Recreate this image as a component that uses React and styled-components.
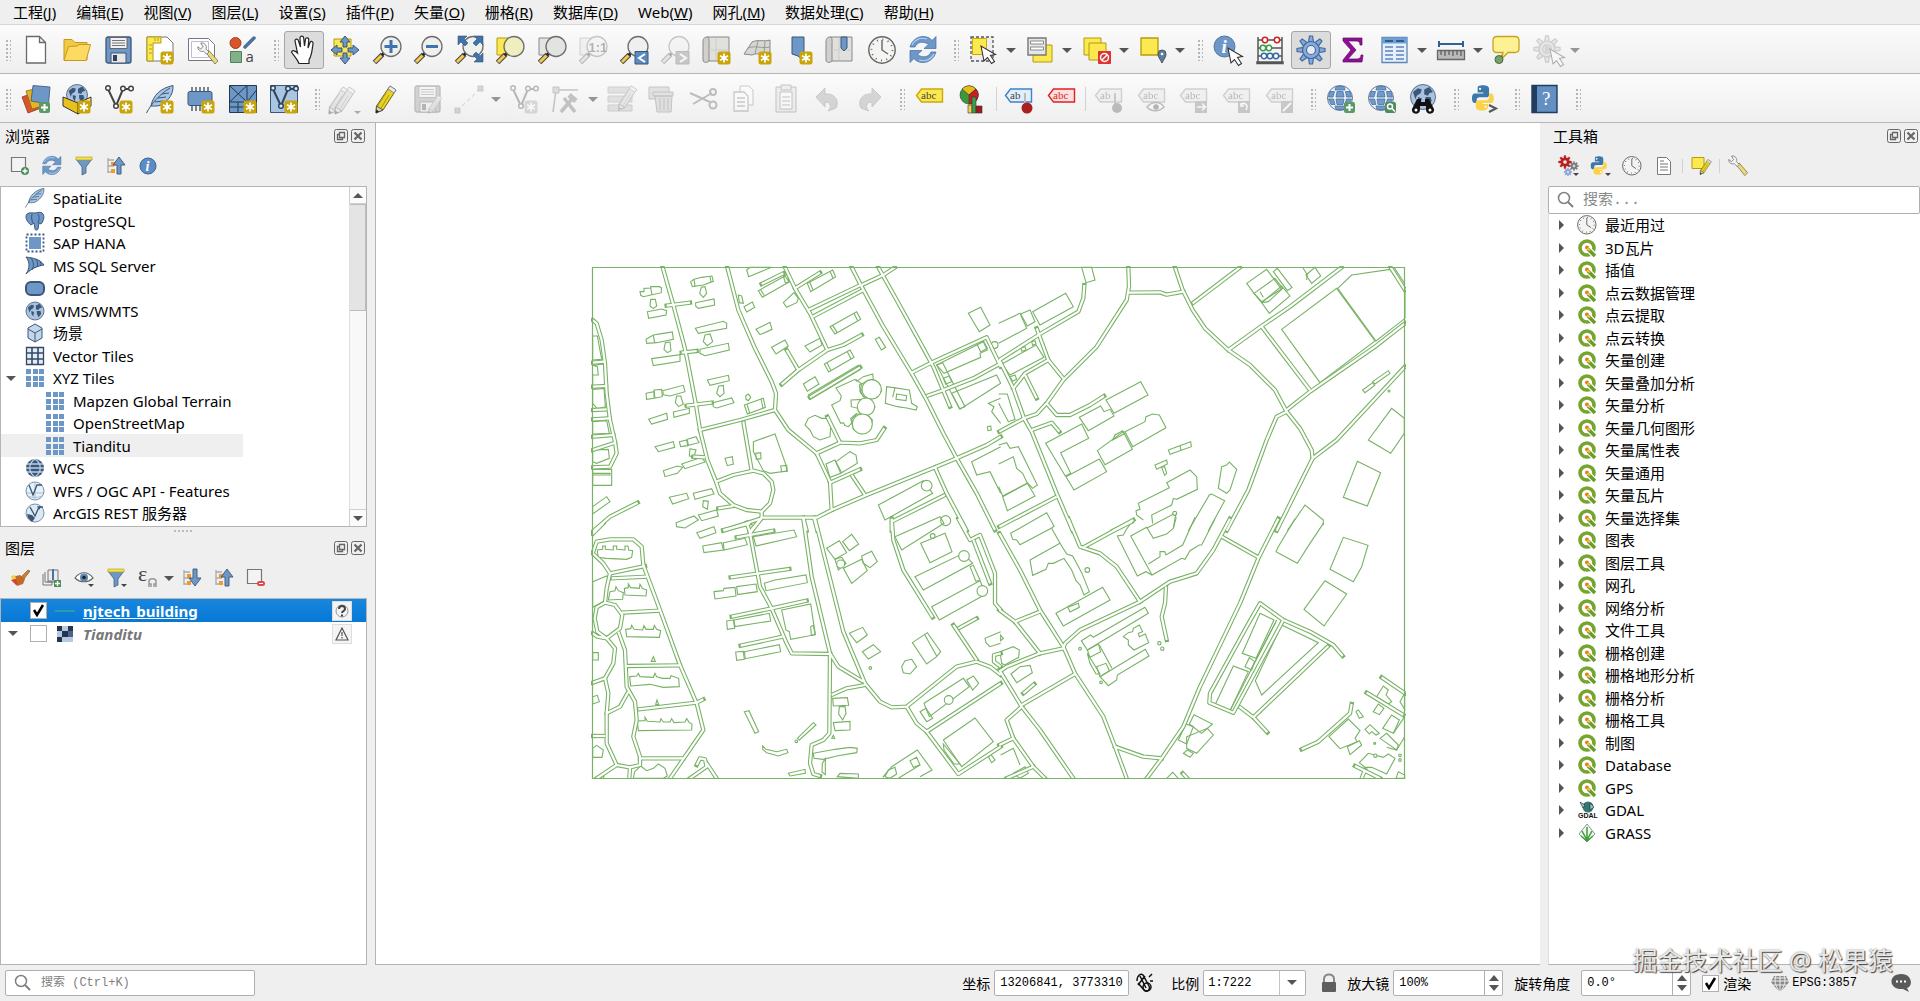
import React, { useState } from 'react';
import styled, { createGlobalStyle, css } from 'styled-components';

const GlobalStyle = createGlobalStyle`
  * { box-sizing: border-box; }
  body {
    margin: 0;
    background: #efefef;
    color: #000;
    font-family: "Noto Sans", "Noto Sans CJK SC", sans-serif;
    font-size: 15px;
  }
  button, input, select { font: inherit; color: inherit; }
`;

const Window = styled.div`
  display: flex;
  flex-direction: column;
  height: 100vh;
  overflow: hidden;
`;

const MenuBar = styled.nav`
  display: flex;
  height: 25px;
  padding-left: 3px;
  border-bottom: 1px solid #d6d6d6;
`;

const MenuItem = styled.button`
  padding: 0 10px;
  border: 0;
  background: none;
  font-size: 15px;
  line-height: 22px;
  white-space: nowrap;
`;

const ToolBar = styled.div`
  display: flex;
  align-items: center;
  height: 49px;
  padding: 2px 0 0 5px;
  border-bottom: 1px solid #b6b6b6;
  background: linear-gradient(#fbfbfb, #efefef);
`;

const Handle = styled.span`
  flex: none;
  width: 6px;
  height: 22px;
  margin: 0 5px 0 10px;
  background-image: radial-gradient(circle, #b5b5b5 1px, transparent 1px);
  background-size: 4px 4px;
  &:first-child { margin-left: 0; }
`;

const ToolGroup = styled.div`
  display: flex;
  flex: none;
  align-items: center;
  justify-content: space-between;
  width: ${({ $width }) => $width}px;
`;

const Tool = styled.button`
  display: flex;
  align-items: center;
  justify-content: center;
  width: 40px;
  height: 38px;
  padding: 0;
  border: 1px solid transparent;
  border-radius: 3px;
  background: none;
  ${({ $active }) => $active && css`
    border-color: #a6a6a6;
    background: #dcdcdc;
  `}
  svg {
    overflow: visible;
    ${({ disabled }) => disabled && css`
      opacity: 0.35;
      filter: grayscale(1);
    `}
  }
`;

const Split = styled.div`
  display: flex;
  align-items: center;
`;

const Arrow = styled.button`
  width: 14px;
  height: 38px;
  padding: 0;
  border: 0;
  background: none;
  opacity: ${({ disabled }) => disabled ? 0.6 : 1};
  &::after {
    content: '';
    display: block;
    margin: 0 auto;
    width: 0;
    border: 5px solid transparent;
    border-top-color: #555;
    border-bottom: 0;
  }
`;

const Separator = styled.span`
  width: 1px;
  height: ${({ $small }) => $small ? 14 : 24}px;
  margin: ${({ $small }) => $small ? '0 -4px' : '0'};
  background: #d2d2d2;
`;

const Main = styled.main`
  display: grid;
  grid-template-columns: 367px minmax(0, 1fr) 372px;
  column-gap: 8px;
  flex: 1;
  min-height: 0;
`;

const LeftDock = styled.div`
  display: flex;
  flex-direction: column;
  min-height: 0;
`;

const Dock = styled.section`
  display: flex;
  flex-direction: column;
  min-height: 0;
  flex: ${({ $fill }) => $fill ? '1' : 'none'};
`;

const DockTitle = styled.header`
  display: flex;
  align-items: center;
  height: 25px;
  padding: 0 2px 0 5px;
  h2 {
    flex: 1;
    margin: 0;
    font-size: 15px;
    font-weight: 400;
    line-height: 22px;
  }
`;

const DockButton = styled.button`
  width: 14px;
  height: 14px;
  padding: 0;
  margin-left: 3px;
  border: 0;
  background: none;
  svg { display: block; }
`;

const DockTools = styled.div`
  display: flex;
  align-items: center;
  gap: 12px;
  height: 38px;
  padding: 0 10px 2px;
`;

const SmallTool = styled.button`
  width: 20px;
  height: 20px;
  padding: 0;
  border: 0;
  background: none;
  svg { display: block; }
`;

const SmallArrow = styled(Arrow)`
  height: 20px;
  margin: 0 -6px 0 -8px;
`;

const TreeFrame = styled.div`
  display: flex;
  flex: ${({ $fill }) => $fill ? '1' : 'none'};
  min-height: 0;
  border: 1px solid #b4b4b4;
  background: #fff;
`;

const Tree = styled.ul`
  flex: 1;
  margin: 0;
  padding: 0;
  list-style: none;
`;

const BrowserTree = styled(Tree)`
  padding-bottom: 2px;
`;

const TreeRow = styled.li`
  display: flex;
  align-items: center;
  height: 22px;
  padding-left: ${({ $child }) => $child ? 44 : 24}px;
  font-size: 15px;
  line-height: 22px;
  white-space: nowrap;
  &:nth-child(even) { height: 23px; }
  svg { flex: none; margin-right: 8px; }
  ${({ $hover }) => $hover && css`
    width: 242px;
    background: #efefef;
  `}
  ${({ $open }) => $open && css`
    padding-left: 5px;
  `}
`;

const Expander = styled.button`
  flex: none;
  width: ${({ $width }) => $width || 19}px;
  height: 20px;
  padding: 0;
  border: 0;
  background: none;
  &::after {
    content: '';
    display: block;
    width: 0;
    border: 5px solid transparent;
    ${({ $closed }) => $closed ? css`
      border-left-color: #555;
      border-right: 0;
    ` : css`
      border-top-color: #555;
      border-bottom: 0;
    `}
  }
`;

const ExpanderSpace = styled.span`
  width: 22px;
`;

const ScrollBar = styled.div`
  display: flex;
  flex-direction: column;
  width: 17px;
  background: #f8f8f8;
`;

const ScrollButton = styled.button`
  height: 17px;
  padding: 0;
  border: 1px solid #cfcfcf;
  border-width: ${({ $up }) => $up ? '0 0 1px 1px' : '1px 0 0 1px'};
  background: #fbfbfb;
  &::after {
    content: '';
    display: block;
    width: 0;
    margin: 0 auto;
    border: 5px solid transparent;
    ${({ $up }) => $up ? 'border-bottom-color: #555; border-top: 0;' : 'border-top-color: #555; border-bottom: 0;'}
  }
`;

const ScrollTrack = styled.div`
  flex: 1;
  border-left: 1px solid #e0e0e0;
`;

const ScrollThumb = styled.div`
  height: 107px;
  border: 1px solid #bdbdbd;
  border-left: 0;
  background: #e4e4e4;
`;

const Splitter = styled.div`
  display: flex;
  justify-content: center;
  height: 8px;
  padding-top: 3px;
  &::after {
    content: '';
    width: 20px;
    height: 2px;
    background: repeating-linear-gradient(90deg, #bbb 0 2px, transparent 2px 4px);
  }
`;

const LayerRow = styled.li`
  display: flex;
  align-items: center;
  height: 23px;
  padding: 0 14px 0 7px;
  font-size: 15px;
  font-weight: 700;
  line-height: 20px;
  color: ${({ $selected }) => $selected ? '#fff' : '#777'};
  background: ${({ $selected }) => $selected ? 'linear-gradient(#1a86dd, #0578d6)' : 'none'};
  font-style: ${({ $selected }) => $selected ? 'normal' : 'italic'};
  text-decoration: ${({ $selected }) => $selected ? 'underline' : 'none'};
`;

const LayerSwatch = styled.span`
  display: flex;
  justify-content: center;
  width: 20px;
  margin: 0 8px;
`;

const LayerName = styled.span`
  flex: 1;
`;

const Indicator = styled.button`
  width: 20px;
  height: 20px;
  padding: 2px;
  border: 1px solid #ddd;
  background: #f4f4f4;
  svg { display: block; }
`;

const CheckWrap = styled.span`
  position: relative;
  flex: none;
  width: 17px;
  height: 17px;
  input {
    appearance: none;
    display: block;
    width: 17px;
    height: 17px;
    margin: 0;
    border: 1px solid #b0b0b0;
    background: #fff;
  }
  svg {
    position: absolute;
    top: 2px;
    left: 2px;
    pointer-events: none;
  }
`;

const Canvas = styled.section`
  min-height: 0;
  border: 1px solid #b4b4b4;
  border-width: 0 0 1px 1px;
  background: #fff;
  svg {
    display: block;
    width: 100%;
    height: 100%;
  }
`;

const ToolboxSearch = styled.label`
  display: flex;
  align-items: center;
  height: 28px;
  padding-left: 8px;
  border: 1px solid #b0b0b0;
  border-radius: 2px;
  background: #fff;
  input {
    flex: 1;
    min-width: 0;
    margin-left: 8px;
    padding: 0;
    border: 0;
    outline: 0;
    background: none;
    font-family: "Liberation Mono", "Noto Sans CJK SC", monospace;
    font-size: 15px;
    &::placeholder { color: #8a8a8a; }
  }
`;

const ToolboxTree = styled(Tree)`
  border-left: 1px solid #dcdcdc;
  background: #fff;
  overflow: hidden;
  border-bottom: 1px solid #b4b4b4;
`;

const ToolboxRow = styled(TreeRow)`
  padding-left: 10px;
`;

const StatusBar = styled.footer`
  display: flex;
  align-items: center;
  height: 36px;
  padding: 0 9px 0 5px;
  font-size: 14px;
  white-space: nowrap;
`;

const fieldBox = css`
  height: 26px;
  border: 1px solid #b0b0b0;
  border-radius: 2px;
  background: #fff;
  font-family: "Liberation Mono", "Noto Sans CJK SC", monospace;
  font-size: 12px;
`;

const Locator = styled.label`
  ${fieldBox}
  display: flex;
  align-items: center;
  width: 250px;
  margin-right: auto;
  padding-left: 8px;
  input {
    flex: 1;
    min-width: 0;
    padding: 0 0 0 9px;
    border: 0;
    outline: 0;
    background: none;
    &::placeholder { color: #808080; }
  }
`;

const Field = styled.div`
  display: flex;
  align-items: center;
  gap: ${({ $gap }) => $gap || 4}px;
  margin-left: ${({ $space }) => $space || 11}px;
`;

const TextBox = styled.input`
  ${fieldBox}
  width: 135px;
  padding: 0 5px;
`;

const Stepper = styled.span`
  ${fieldBox}
  display: flex;
  width: 110px;
  input {
    flex: 1;
    min-width: 0;
    padding: 0 5px;
    border: 0;
    border-right: 1px solid #b0b0b0;
    background: none;
  }
`;

const StepButtons = styled.span`
  display: flex;
  flex-direction: column;
  justify-content: center;
  gap: 4px;
  width: 17px;
  button {
    height: 6px;
    padding: 0;
    border: 0;
    background: none;
    svg { display: block; margin: 0 auto; }
  }
`;

const ScaleBox = styled.span`
  ${fieldBox}
  display: flex;
  position: relative;
  width: 103px;
  select {
    appearance: none;
    width: 100%;
    padding: 0 4px;
    border: 0;
    background: none;
  }
  &::after {
    content: '';
    position: absolute;
    top: 9px;
    right: 8px;
    border: 5px solid transparent;
    border-top-color: #555;
    border-bottom: 0;
    pointer-events: none;
  }
  &::before {
    content: '';
    position: absolute;
    top: 0;
    bottom: 0;
    right: 25px;
    width: 1px;
    background: #c4c4c4;
  }
`;

const StatusButton = styled.button`
  display: flex;
  align-items: center;
  gap: 2px;
  margin-left: ${({ $space }) => $space}px;
  padding: 0;
  border: 0;
  background: none;
  font-family: "Liberation Mono", monospace;
  font-size: 12px;
`;

const Watermark = styled.div`
  position: absolute;
  right: 27px;
  bottom: 23px;
  color: #e9e9e9;
  font-size: 25px;
  line-height: 36px;
  text-shadow: 1px 1px 1px #444, 0 0 2px #888;
  pointer-events: none;
`;

/* ---------- shared icon parts, 28px grid ---------- */

const BLUE = '#6d97c7';
const NAVY = '#3b5677';
const YELLOW = '#fce94f';

const Star = () => (
  <g>
    <rect x="14.5" y="15.5" width="13" height="13" rx="2.5" fill="#c9a509" />
    <path d="M21 17.500v9M17 19.700l8 4.600M17 24.300l8-4.600" stroke="#fff" strokeWidth="1.7" />
    <circle cx="21" cy="22" r="2" fill="#fff" />
  </g>
);

const PlusBadge = ({ x = 16, y = 17 }) => (
  <g>
    <rect x={x} y={y} width="11" height="11" rx="2" fill="#5a9a68" />
    <path d={`M${x + 5.5} ${y + 2}v7M${x + 2} ${y + 5.5}h7`} stroke="#fff" strokeWidth="2" />
  </g>
);

const Lens = ({ children, fill = '#eef0ee' }) => (
  <g>
    <path d="M1.5 26.5l8-8" stroke="#444" strokeWidth="5" />
    <path d="M2 26l6.5-6.5" stroke="#f5c94c" strokeWidth="3" />
    <path d="M9 19l3-3" stroke="#222" strokeWidth="3" />
    <circle cx="18" cy="10.5" r="10" fill={fill} stroke="#6e6e6e" strokeWidth="1.3" />
    {children}
  </g>
);

const Cursor = ({ x = 14, y = 11 }) => (
  <path transform={`translate(${x} ${y})`} d="M0 0l3 15 3.5-3.5 4 6 3-2-4-6 5-1z" fill="#fff" stroke="#333" strokeWidth="1.1" />
);

const Tag = ({ fill = '#e6e6df', stroke = '#888', text = 'abc', color = '#444' }) => (
  <g>
    <path d="M.5 10.5l5-6.5h21v13h-21z" fill={fill} stroke={stroke} strokeWidth="1.4" />
    <text x="5" y="14" fontFamily="Liberation Serif, serif" fontSize="11" fill={color}>{text}</text>
  </g>
);

const Globe = () => (
  <g>
    <circle cx="13" cy="13" r="12.5" fill="#e9f0f7" stroke="#5f7f9f" />
    <path d="M3 6.5h4.500l-1.500 5.500H1.500zM10 6.500h6l1 5.500H9zM18.500 6.500H23l1.500 5.500h-5zM1.500 14h5l1.500 5.500H4zM9 14h8l-1 5.500h-6zM19.500 14h5L22 19.500h-4zM9 1.500h8l1 3.500H8zM8 21h10l-1 3.500H9z" fill="#6d9ad0" stroke="#4f7094" strokeWidth=".8" />
  </g>
);

const WorldFill = ({ cx, cy, r }) => (
  <g>
    <circle cx={cx} cy={cy} r={r} fill="#a9c3e0" stroke={NAVY} strokeWidth=".8" />
    <g transform={`translate(${cx - r} ${cy - r}) scale(${r / 10})`} fill={NAVY}>
      <path d="M2 6l4-3 3 1-1 3-3 2-1 3zM6 10l3 1-1 5-2-3zM11 4l4-2 3 4-3 1-1 2-3-1zM12 10l4 0 1 3-3 4-2-4z" />
    </g>
  </g>
);

const Gear = ({ cx, cy, r, fill, stroke, width = 1 }) => (
  <g transform={`translate(${cx} ${cy}) scale(${r / 14})`}>
    {[0, 45, 90, 135, 180, 225, 270, 315].map(a => (
      <path key={a} transform={`rotate(${a})`} d="M-2.5-8l1-6h3l1 6z" fill={fill} stroke={stroke} strokeWidth={width} />
    ))}
    <circle r="8.5" fill={fill} stroke={stroke} strokeWidth={width} />
    <circle r="4.5" fill="#e6ebf2" stroke={stroke} strokeWidth={width} />
  </g>
);

const Pencil = ({ x = 0, y = 0, s = 1 }) => (
  <g transform={`translate(${x} ${y}) scale(${s})`}>
    <path d="M4.5 21L18 1l6 4-13 20-7 3z" fill="#e9d31f" stroke="#6b6330" />
    <path d="M18 1l6 4-2 3-6-4z" fill="#ececec" stroke="#888" />
    <path d="M14 8l-9 14M17 10l-8 13" stroke="#a8961b" />
    <path d="M4.5 21l-.5 7 7-3z" fill="#ddd3b0" stroke="#555" />
    <path d="M4 28l.2-3.5 3 2z" fill="#222" />
  </g>
);

const Feather = () => (
  <g>
    <path d="M5 21C7 10 15 3 27 .5c.5 8-4 15-12 19.500-4 1.500-7 1-10 1z" fill="#a8c5e4" stroke={NAVY} />
    <path d="M.5 28C5 19 14 9 24 3M9 17l8-1M12 13l8-1M16 9l7-1" fill="none" stroke={NAVY} />
  </g>
);

const Clock = () => (
  <g fill="none" stroke="#666">
    <circle cx="14" cy="14" r="13.2" fill="#f4f4f2" strokeWidth="1.4" />
    <circle cx="14" cy="14" r="10.5" strokeDasharray="1 4.5" strokeWidth="1.8" />
    <path d="M14 4v10l6 4" strokeWidth="1.4" />
  </g>
);

const Refresh = () => (
  <g fill={BLUE} stroke="#3c6ea8" strokeWidth=".7">
    <path d="M1 11C3 4 9 0 15 .5c4 .3 6.500 2 8 4l4-4v12H15l4.500-4C14 4.500 8 6 6 11z" />
    <path d="M27 16c-2 7-8 11-14 10.500-4-.3-6.500-2-8-4l-4 4v-12h12l-4.500 4C14 22.500 20 21 22 16z" />
    <path d="M3 9c3-6 9-8 15-6M25 18c-3 6-9 8-15 6" fill="none" stroke="#b7d1ee" strokeWidth="1.2" />
  </g>
);

const Wrench = ({ x = 0, y = 0, s = 1 }) => (
  <g transform={`translate(${x} ${y}) scale(${s})`}>
    <path d="M12 13l4-3 12 14-4 4z" fill="#ecd77a" stroke="#6e6640" />
    <path d="M5 0c5-1 9 4 7 8l4 4-3 3-4-4c-4 1-8-1-8-6l4 3 3-3z" fill="#f2f2f2" stroke="#666" />
  </g>
);

const Python = () => (
  <g>
    <path d="M8 1c2-1 7-1 9 0 1 .5 2 1.500 2 3v6c0 2-1 3-3 3H9c-2 0-3 1-3 3v3H4c-2 0-3-2-3-5s1-5 3-5h9V8H7V4c0-1.500 0-2.500 1-3z" fill="#3d78ab" />
    <path d="M16 26c-2 1-7 1-9 0-1-.5-2-1.500-2-3v-4c0-2 1-3 3-3h8c2 0 3-1 3-3V9h2c2 0 3 2 3 5s-1 5-3 5h-9v1h6v3c0 1.500-1 2.500-2 3z" fill="#fdd246" />
    <circle cx="9.5" cy="4" r="1.2" fill="#fff" />
    <circle cx="15.5" cy="23" r="1.2" fill="#fff" />
  </g>
);

const Disk = () => (
  <g>
    <rect x="1" y="1" width="25" height="26" rx="2" fill={BLUE} stroke={NAVY} strokeWidth="1.3" />
    <path d="M5 1.500h17v11H5z" fill="#f1f1f1" stroke="#666" />
    <path d="M7 4.500h13M7 7h13M7 9.500h13" stroke="#777" />
    <path d="M6 17h15v10H6z" fill="#e8e8e8" stroke={NAVY} />
    <path d="M8 19h4v6H8z" fill="#2c4360" />
  </g>
);

const VShape = ({ color = '#444', fill = '#fff' }) => (
  <g fill="none" stroke={color} strokeWidth="1.5">
    <path d="M3 4l8 17 7-17h6" strokeWidth="2" />
    <circle cx="3" cy="3" r="2.3" fill={fill} />
    <circle cx="11" cy="21" r="2.3" fill={fill} />
    <circle cx="18" cy="3.5" r="2.3" fill={fill} />
    <circle cx="26" cy="3.5" r="2.3" fill={fill} />
  </g>
);

const MapSheet = () => (
  <g stroke="#888" fill="#e0e0dd">
    <path d="M4 1h22v24H4z" />
    <path d="M4 1c-4 0-4 4-4 4v19c0 3 4 3 6 1V5c0-2 0-4-2-4z" fill="#d0d0cc" />
    <path d="M6 6H1M13 2v22M6 14h20" stroke="#ccc" />
  </g>
);

const ICONS = {
  fresh: <path d="M4.5 .5h13l6 6v20.5h-19zM17.5 .5v6h6" fill="#fff" stroke="#6a6a6a" strokeWidth="1.3" />,
  open: <g stroke="#c39a1c" strokeLinejoin="round"><path d="M1 24V3.500h8l3 3h12V24z" fill="#f3c944" /><path d="M1 24.500L5.500 10.500 14 10l2-1.500h11.500L23 24.500z" fill="#fddb62" /></g>,
  save: <Disk />,
  layout: <g><path d="M1 1h20l6 6v18H1z" fill="#fff" stroke="#777" /><path d="M1 1h14v6H7v18H1z" fill={YELLOW} stroke="#b49a10" /><path d="M3 9h3M3 13h3M3 17h3M9 2v3M12 2v3" stroke="#b49a10" /><Star /></g>,
  manager: <g><path d="M.5 2.500h20l6 6v16H.5z" fill="#fff" stroke="#777" /><path d="M3.500 5.500h17v16h-17z" fill="none" stroke="#b6bde0" /><Wrench x={9} y={7} s={0.75} /></g>,
  style: <g><circle cx="6.500" cy="7" r="5.500" fill="#d9542b" stroke="#a33e1e" /><path d="M16 11l9-9" stroke="#49729f" strokeWidth="3.500" strokeLinecap="round" /><path d="M1.500 15.500h11v11h-11z" fill="#7fb387" stroke="#55805b" /><text x="16.500" y="25.500" fontSize="15" fill="#444" fontFamily="Open Sans, sans-serif">a</text></g>,
  hand: <path d="M9 27.500C7 22 3 19 1.500 16c1-2.500 4-1 6 1L5 5c0-2.500 3-2.500 3.500 0l2 6L10 2c0-2.500 3.500-2.500 3.700 0l.8 8 1-7c.5-2 3.500-1.500 3.300.8L18 12l2-5.500c1-2 3.500-1 3 1.500-1 6-1 11-4 16v3.500z" fill="#fff" stroke="#222" strokeWidth="1.2" />,
  pan: <g><path d="M3 3h17v17H3z" fill={YELLOW} stroke="#b49a10" /><path d="M14 0l5 6h-3v5h-4V6H9zM14 28l5-6h-3v-5h-4v5H9zM0 14l6-5v3h5v4H6v3zM28 14l-6-5v3h-5v4h5v3z" fill={BLUE} stroke={NAVY} /></g>,
  zoomIn: <Lens><path d="M18 4v13M11.500 10.500h13" stroke="#3f73ae" strokeWidth="3" /></Lens>,
  zoomOut: <Lens><path d="M12 10.500h12" stroke="#3f73ae" strokeWidth="3" /></Lens>,
  zoomFull: <g><Lens /><g fill="#3f73ae" stroke={NAVY} strokeWidth=".6"><path d="M3 0h9L9 3l4 4-3 3-4-4-3 3zM28 0v9l-3-3-4 4-3-3 4-4-3-3zM28 26h-9l3-3-4-4 3-3 4 4 3-3z" /></g></g>,
  zoomSelection: <g><path d="M1 2h13v17H1z" fill={YELLOW} stroke="#b49a10" /><Lens fill="#eeeebf" /></g>,
  zoomLayer: <g><path d="M1 2h13v17H1z" fill="#e4e4e0" stroke="#888" /><Lens fill="#e2e4e2" /></g>,
  zoomNative: <g><path d="M1 2h13v17H1z" fill="#e4e4e0" stroke="#888" /><Lens><text x="9.500" y="15.500" fontSize="13" fontWeight="700" fill="#333" fontFamily="Liberation Sans, sans-serif">1:1</text></Lens></g>,
  zoomLast: <g><Lens /><path d="M15 15.500h13v12.500H15z" fill="#5a8ac0" stroke={NAVY} /><path d="M25 18l-6 4 6 4" fill="none" stroke="#fff" strokeWidth="2" /></g>,
  zoomNext: <g><Lens /><path d="M15 15.500h13v12.500H15z" fill="#777" stroke="#555" /><path d="M19 18l6 4-6 4" fill="none" stroke="#fff" strokeWidth="2" /></g>,
  newMap: <g><MapSheet /><Star /></g>,
  map3d: <g><path d="M0 18L8 6c7-3 12 0 18-2v14c-8 2-12-2-18 1z" fill="#d6d6d2" stroke="#888" /><path d="M4 12c8-3 14 1 22-1M14 5l-3 13M21 5l-1 13" fill="none" stroke="#999" /><Star /></g>,
  newBookmark: <g><path d="M7 1h12v24l-6-5-6-2z" fill={BLUE} stroke={NAVY} /><Star /></g>,
  bookmarks: <g><MapSheet /><path d="M15 1h6v11l-3 3-3-3z" fill={BLUE} stroke={NAVY} /></g>,
  clock: <Clock />,
  refresh: <Refresh />,
  select: <g><path d="M1 1h22v24H1z" fill="#eee" stroke="#555" strokeWidth="1.3" strokeDasharray="3 2" /><path d="M2.500 2.500h14v16h-14z" fill={YELLOW} stroke="#c8a910" /><Cursor x={11} y={10} /></g>,
  form: <g><path d="M7 9h19v17H7z" fill={YELLOW} stroke="#b49a10" /><path d="M2 2h18v17H2z" fill="#e6e6e6" stroke="#777" strokeWidth="1.4" /><path d="M4.500 5h13v3h-13zM4.500 11h13v3h-13z" fill="#fff" stroke="#888" /></g>,
  deselect: <g><path d="M1 2h17v17H1z" fill={YELLOW} stroke="#b49a10" /><path d="M6 7h17v17H6z" fill={YELLOW} stroke="#b49a10" /><rect x="15" y="15" width="13" height="13" rx="1" fill="#d33" /><circle cx="21.500" cy="21.500" r="4" fill="none" stroke="#fff" strokeWidth="1.500" /><path d="M18.700 24.300l5.600-5.600" stroke="#fff" strokeWidth="1.500" /></g>,
  location: <g><path d="M2 2h17v17H2z" fill={YELLOW} stroke="#b49a10" strokeWidth="1.3" /><path d="M23 27c-2-4-4-6-4-9a4 4 0 0 1 8 0c0 3-2 5-4 9z" fill="#5f7f99" stroke="#456" /><circle cx="23" cy="18" r="1.3" fill="#fff" /></g>,
  identify: <g><circle cx="10.500" cy="10.500" r="10.500" fill="#6d97c7" stroke="#5577a0" /><text x="7.500" y="17" fontSize="19" fontStyle="italic" fontWeight="700" fill="#fff" fontFamily="Liberation Serif, serif">i</text><Cursor x={14} y={12} /></g>,
  abacus: <g fill="none" strokeWidth="1.500"><path d="M2 1v25M26 1v25M1 26h26v1.500H1zM2 4h24M2 12h24M2 20h24" stroke="#555" /><g stroke="#c22" fill="#fff"><circle cx="9" cy="4" r="2.700" /><circle cx="21" cy="4" r="2.700" /></g><g stroke="#3a9a4a" fill="#fff"><circle cx="7" cy="12" r="2.700" /><circle cx="13" cy="12" r="2.700" /></g><g stroke="#3a6a9a" fill="#fff"><circle cx="8" cy="20" r="2.700" /><circle cx="14" cy="20" r="2.700" /><circle cx="20" cy="20" r="2.700" /></g></g>,
  gear: <Gear cx={14} cy={14} r={14} fill="#86aadb" stroke="#44699c" width={1.2} />,
  sigma: <path d="M4 2h19v7h-2c0-3-1-4-4-4H9l8 9-8 9h9c3 0 4-2 4-4h2l-1 7H4v-2l8-10-8-9z" fill="#8f0e96" stroke="#5e0863" strokeWidth=".7" />,
  table: <g><path d="M1 1.500h25v25H1z" fill="#e6effa" stroke="#5c87b8" strokeWidth="1.3" /><path d="M1 1.500h25v6H1z" fill="#6fa0d5" /><path d="M4 5h8M15 5h8" stroke="#24466f" strokeWidth="1.500" /><path d="M4 11h8M15 11h8M4 15h8M15 15h8M4 19h8M15 19h8M4 23h8M15 23h8" stroke="#5c87b8" strokeWidth="1.500" /></g>,
  measure: <g><path d="M2 8h24M2 5v6M26 5v6" stroke="#2d6394" strokeWidth="2" /><path d="M.5 14.500h27v9H.5z" fill="#b9b9b9" stroke="#666" strokeWidth="1.3" /><path d="M4 15v4M8 15v5M12 15v4M16 15v5M20 15v4M24 15v5" stroke="#444" /></g>,
  tip: <g><path d="M11 17l-4 7" stroke="#777" /><path d="M5 .5h18q4 0 4 4v8q0 4-4 4h-7l-6 6 1-6H5q-4 0-4-4v-8q0-4 4-4z" fill="#fdf193" stroke="#c4a51d" strokeWidth="1.3" /><circle cx="7" cy="23.500" r="4" fill="#7aa06a" stroke="#486a3c" /></g>,
  run: <g><Gear cx={13} cy={13} r={13} fill="#ccc" stroke="#888" width={1.4} /><path d="M10.500 8l8 5-8 5z" fill="#999" /><Cursor x={16} y={13} /></g>,
  dataSource: <g stroke="#8a3a1a" strokeWidth=".8"><path d="M0 12l11-4 8 15-13 5z" fill="#d9542b" /><path d="M4 6l12-3 5 18-11 3z" fill="#e7b321" stroke="#8d6d10" /><path d="M11 .5l17 1.500-1.500 17L9 16z" fill={BLUE} stroke={NAVY} /><g stroke="none"><PlusBadge x={17} y={17} /></g></g>,
  geoPackage: <g><WorldFill cx={14} cy={10} r={10.5} /><path d="M0 12l15 6v11L0 21z" fill="#e9c11d" stroke="#333" /><path d="M15 18l13-6v9l-13 8z" fill="#fbe75b" stroke="#333" /><Star /></g>,
  newShape: <g><VShape /><Star /></g>,
  feather: <g><Feather /><Star /></g>,
  chip: <g><path d="M5 2v24M9 2v24M13 2v24M17 2v24M21 2v24" stroke="#456" strokeWidth="1.4" /><rect x="1" y="6.500" width="24" height="14" rx="2" fill={BLUE} stroke={NAVY} /><Star /></g>,
  mesh: <g><path d="M.5 .5h27v27H.5z" fill={BLUE} stroke="#24384f" /><path d="M.5 17h27M18 .5v16M9 17v10M18 17v10M.5 .5L18 17M.5 17L18 .5M27.500 5L18 17M.5 22H18" fill="none" stroke="#24384f" /><Star /></g>,
  virtual: <g><path d="M.5 .5h27v27H.5z" fill="#a9c5e2" stroke={NAVY} /><VShape color="#2e455f" fill="#dce9f5" /><Star /></g>,
  pencils: <g><Pencil x={-6} y={1} /><Pencil x={0} y={1} /><path d="M23 26h7l-3.500 3z" fill="#222" /></g>,
  pencil: <Pencil />,
  saveEdits: <g><Disk /><Pencil x={12} y={10} s={0.65} /></g>,
  line: <g fill="#999" stroke="#777"><path d="M2 26L26 3" strokeDasharray="4 3" /><path d="M0 23h5v5H0zM23 1h5v5h-5z" /></g>,
  vertexNew: <g><VShape /><Star /></g>,
  vertexTool: <g fill="none" stroke="#666"><path d="M4 5L1 27M4 5h22" strokeWidth="1.500" /><path d="M1 2h6v6H1z" fill="#aaa" /><path d="M9 27L20 14M12 13l11 14" strokeWidth="3.500" /><path d="M17 10l7 6" strokeWidth="5" /></g>,
  modify: <g fill="#bbb" stroke="#888"><path d="M1 2h24v6H1zM1 11h24v6H1zM1 20h24v6H1z" /><Pencil x={8} y={0} s={0.9} /></g>,
  trash: <g fill="#bbb" stroke="#666"><path d="M1 2h20v12H1z" /><path d="M5 7h20v4H5zM7 11h17l-1 16H9zM12 13v12M16 13v12M20 13v12" /></g>,
  cut: <g fill="none" stroke="#555" strokeWidth="2"><path d="M0 8l20 9M3 19L22 8" /><circle cx="23" cy="7" r="3" /><circle cx="23" cy="20" r="3.500" /></g>,
  copy: <g fill="#fff" stroke="#777"><path d="M9 1h9l4 4v15H9z" /><path d="M3 7h10l4 4v15H3zM6 13h8M6 17h8M6 21h8" strokeWidth="1.3" /></g>,
  paste: <g fill="#ddd" stroke="#666"><path d="M4 2h20v25H4z" /><path d="M8 7h12v17H8z" fill="#fff" /><path d="M9 0h10v5H9zM10 12h8M10 16h8M10 20h8" /></g>,
  undo: <path d="M2 12l9-9v6c9-1 15 6 11 14l-8 3c4-4 3-9-3-9v5z" fill="#999" stroke="#777" />,
  redo: <path d="M26 12l-9-9v6C8 8 2 15 6 23l8 3c-4-4-3-9 3-9v5z" fill="#999" stroke="#777" />,
  label: <Tag fill={YELLOW} stroke="#c8a910" />,
  diagram: <g stroke="#333" strokeWidth=".6"><circle cx="10" cy="10" r="9" fill="#3a9a3a" /><path d="M10 10L3 4a9 9 0 0 1 14 0z" fill="#e5bd16" /><path d="M10 10l7-6a9 9 0 0 1-7 15z" fill="#c81e1e" /><path d="M9 20h4v8H9z" fill="#f1d24a" /><path d="M13 12h4v16h-4z" fill="#3d9e4a" /><path d="M17 21h6v7h-6z" fill="#9c1c1c" /></g>,
  labelPin: <g><Tag fill="#e2effb" stroke="#3e82cf" text="ab" /><path d="M20 8v12" stroke="#bbb" strokeWidth="2" /><circle cx="22" cy="23" r="5.500" fill="#a82020" /></g>,
  labelRed: <Tag fill="#fde0e0" stroke="#dd2222" color="#d22" />,
  labelHold: <g><Tag text="ab" /><path d="M20 8v12" stroke="#777" strokeWidth="2" /><circle cx="22" cy="23" r="5" fill="#555" /></g>,
  labelShow: <g><Tag /><path d="M9 22c5-6 13-6 17 0-5 5-13 5-17 0z" fill="#fff" stroke="#555" strokeWidth="1.4" /><circle cx="18" cy="22" r="2.800" fill="#444" /></g>,
  labelMove: <g><Tag /><path d="M15 16h12v12H15z" fill="#777" /><path d="M17 22h8M22 18.500l3.500 3.500-3.500 3.500" fill="none" stroke="#fff" strokeWidth="1.6" /></g>,
  labelRotate: <g><Tag /><path d="M15 16h12v12H15z" fill="#777" /><path d="M18 20c3-4 8 0 5 5M18 18v3h3" fill="none" stroke="#fff" strokeWidth="1.6" /></g>,
  labelEdit: <g><Tag /><path d="M15 16h12v12H15z" fill="#777" /><path d="M17 26l8-8" stroke="#fff" strokeWidth="2" /></g>,
  globeAdd: <g><Globe /><PlusBadge x={17} y={17} /></g>,
  globeFind: <g><Globe /><rect x="17" y="17" width="11" height="11" rx="2" fill="#4d8d5b" /><circle cx="22" cy="21.500" r="2.500" fill="none" stroke="#fff" strokeWidth="1.500" /><path d="M24 23.500l3 3" stroke="#fff" strokeWidth="1.500" /></g>,
  binoculars: <g><WorldFill cx={14} cy={12} r={12.5} /><path d="M8 14h4v3h4v-3h4l5 10c1 6-8 6-8 1v-4h-6v4c0 5-9 5-8-1z" fill="#111" /><circle cx="7" cy="25" r="1.500" fill="#fff" /><circle cx="21" cy="25" r="1.500" fill="#fff" /></g>,
  python: <g><g transform="translate(1 0) scale(.95)"><Python /></g><path d="M19 20l7 3.500-7 3.500" fill="none" stroke="#555" strokeWidth="2" /></g>,
  help: <g><path d="M1 .5h25v27H1z" fill="#648fc2" stroke="#223c5e" strokeWidth="1.4" /><path d="M1 .5h5v27H1z" fill="#233d5f" /><text x="11" y="20" fontSize="19" fill="#fff" fontFamily="Liberation Serif, serif">?</text></g>,
};

/* ---------- 20px icons ---------- */

const Grid9 = ({ color }) => (
  <g fill={color}>
    {[1, 8, 14].map(y => [1, 8, 14].map(x => <rect key={`${x}-${y}`} x={x} y={y} width="5" height="5" />))}
  </g>
);

const TreeUpDown = ({ down }) => (
  <g>
    <path d="M2 2v15M2 4h6M2 10h6M2 16h6" fill="none" stroke="#aaa" strokeWidth="1.3" />
    <path d="M5 6h4v4H5zM5 13h4v4H5z" fill="#f39a2d" />
    <path d={down ? 'M11 1h4v9h4l-6 8-6-8h4z' : 'M11 18h4V9h4l-6-8-6 8h4z'} fill={BLUE} stroke={NAVY} strokeWidth=".9" />
  </g>
);

const Funnel = () => (
  <g>
    <path d="M2 3l6 8v8l4-2v-6l6-8z" fill={BLUE} stroke={NAVY} strokeWidth=".7" />
    <path d="M2 1h16v3H2z" fill="#f7e14a" stroke="#a79420" strokeWidth=".6" />
  </g>
);

const SMALL = {
  addLayer: <g><path d="M1.5 1.500h14v14h-14z" fill="#f3f3f3" stroke="#777" strokeWidth="1.2" /><circle cx="15" cy="15" r="4" fill="#4f8d5c" /><path d="M15 12.500v5M12.500 15h5" stroke="#fff" strokeWidth="1.4" /></g>,
  refresh: <g transform="scale(.7)"><Refresh /></g>,
  filter: <Funnel />,
  collapse: <TreeUpDown />,
  expand: <TreeUpDown down />,
  info: <g><circle cx="10" cy="10" r="8" fill="#5b8cc3" stroke="#3c6797" /><text x="7.500" y="15" fontSize="14" fontStyle="italic" fontWeight="700" fill="#fff" fontFamily="Liberation Serif, serif">i</text></g>,
  brush: <g><path d="M11 9l7-7 2 1-6 8z" fill="#c2843a" stroke="#805020" strokeWidth=".6" /><path d="M2 9l8-2 5 4-2 5-6 2z" fill="#c06a2a" /><path d="M1 8l4-1 1 4-4 1z" fill="#f3d043" /><path d="M1 12l5-1 2 5-2 1z" fill="#d8402f" /></g>,
  group: <g fill="#ececec" stroke="#777"><path d="M6 2h10v11H6z" /><path d="M1 6v11h9v-3H5M3 4v10h9" fill="none" /><path d="M11 1v11" stroke="#4674a8" strokeWidth="2" /><rect x="12" y="12" width="7" height="7" fill="#4f8d5c" stroke="none" /><path d="M15.500 13v5M13 15.500h5" stroke="#fff" strokeWidth="1.3" /></g>,
  eye: <g><path d="M1 10c5-7 13-7 18 0-5 5-13 5-18 0z" fill="#fff" stroke="#666" strokeWidth="1.2" /><circle cx="10" cy="9.500" r="4" fill="#5b87b5" /><circle cx="10" cy="9.500" r="1.800" fill="#222" /><path d="M14 16h6l-3 3z" fill="#444" /></g>,
  filterMenu: <g><Funnel /><path d="M15 16h6l-3 3z" fill="#444" /></g>,
  epsilon: <g><text x="0" y="13" fontSize="22" fill="#444" fontFamily="Liberation Serif, serif">ε</text><path d="M11 19v-6c0-3 7-3 7 0v6M11 16h2v3M18 16h-2v3" fill="none" stroke="#999" strokeWidth="1.500" /></g>,
  removeLayer: <g><path d="M1.500 1.500h14v14h-14z" fill="#f3f3f3" stroke="#777" strokeWidth="1.2" /><rect x="11" y="13" width="8" height="5" rx="2.500" fill="#e0474c" /><path d="M13 15.500h4" stroke="#fff" /></g>,
  models: <g><Gear cx={7} cy={6} r={6.5} fill="#c8201f" stroke="#a01010" /><Gear cx={16} cy={10} r={4.5} fill="#777" stroke="#666" /><Gear cx={10} cy={16} r={4} fill="#8aa5d6" stroke="#7c95c2" /><path d="M15 17h6l-3 3z" fill="#444" /></g>,
  python: <g><g transform="scale(.7)"><Python /></g><path d="M15 17h6l-3 3z" fill="#444" /></g>,
  clock: <g transform="scale(.7)"><Clock /></g>,
  log: <g fill="#fff" stroke="#777"><path d="M3.500 1.500h9l4 4v13h-13z" /><path d="M6 8h8M6 11h8M6 14h8M6 5h4" /></g>,
  inPlace: <g><path d="M1 1.500h12v11H1z" fill={YELLOW} stroke="#b49a10" /><Pencil x={7} y={3} s={0.55} /></g>,
  wrench: <Wrench s={0.7} />,
  feather: <g transform="scale(.7)"><Feather /></g>,
  elephant: <g fill={BLUE} stroke={NAVY}><path d="M2 3c3-2 6-1 8-1s6-2 8 1c2 3 0 8-2 10l-2-1-1 6c-1 2-3 1-3 0l-1-6-3 2C3 12-1 6 2 3z" /><path d="M7 3c-1 4 0 7 1 9M13 3c2 3 1 6 0 9" fill="none" /></g>,
  hana: <g><path d="M4 4h12v12H4z" fill={BLUE} /><path d="M1.500 1.500h17v17h-17z" fill="none" stroke={NAVY} strokeWidth="1.800" strokeDasharray="2 2" /></g>,
  mssql: <g fill={BLUE} stroke={NAVY}><path d="M1 1c7 1 14 2 18 8-6 1-12 3-18 9 4-6 4-12 0-17z" /><path d="M6 2c3 4 3 8 1 12M11 3c2 3 2 5 1 8M15 5c1 2 1 3 0 5" fill="none" /></g>,
  oracle: <rect x="1" y="4" width="18" height="13" rx="5" fill={BLUE} stroke={NAVY} strokeWidth="2" />,
  world: <WorldFill cx={10} cy={10} r={9} />,
  cube: <g fill="#c3d6ea" stroke={NAVY} strokeLinejoin="round"><path d="M10 1l7 4v10l-7 4-7-4V5z" /><path d="M3 6l7 4 7-4M10 10v9" fill="none" /></g>,
  vectorGrid: <g><path d="M1.500 1.500h17v17h-17z" fill="#e4edf5" stroke="#334a66" strokeWidth="1.3" /><path d="M7 1.500v17M13 1.500v17M1.500 7h17M1.500 13h17" stroke="#334a66" strokeWidth="1.6" /></g>,
  xyz: <Grid9 color={BLUE} />,
  wcs: <g><circle cx="10" cy="10" r="9" fill={NAVY} /><path d="M2 6h16M1 10h18M2 14h16M10 1c-7 5-7 13 0 18M10 1c7 5 7 13 0 18" fill="none" stroke="#b9cfe6" strokeWidth="1.3" /></g>,
  wfs: <g><circle cx="10" cy="10" r="9" fill="#e8f0f8" stroke="#7590ad" /><path d="M3 15c4 2 10 2 14 0M10 1v18M2 12h16" fill="none" stroke="#a8bfd6" /><path d="M4 4l4 10 4-10h5" fill="none" stroke={NAVY} strokeWidth="1.3" /></g>,
  arcgis: <g><circle cx="10" cy="10" r="9" fill="#dce8f4" stroke="#7590ad" /><path d="M5 4l5 9 4-9h4" fill="none" stroke={NAVY} strokeWidth="1.3" /><path d="M2 11l5 1 3 3-3 4-4-4zM12 3l4 1-2 3z" fill={NAVY} /></g>,
  qgis: <g><circle cx="10" cy="10" r="7" fill="none" stroke="#76a52f" strokeWidth="3.600" /><path d="M11 11l7 7" stroke="#fff" strokeWidth="6" /><path d="M11 11l7 7" stroke="#6b9c2b" strokeWidth="3.600" /><circle cx="10" cy="9.500" r="2" fill="#ee7913" /><path d="M10.500 10l2.500 2.500" stroke="#f3c14b" strokeWidth="2" /></g>,
  gdal: <g><circle cx="11" cy="7" r="5.500" fill="#35766f" /><path d="M3 2l5 3-2 3zM13 3l4 4-4 3z" fill="#9cc7c0" stroke="#223" strokeWidth=".6" /><text x="1" y="18" fontSize="7" fontWeight="700" fill="#111" fontFamily="Liberation Sans, sans-serif">GDAL</text></g>,
  grass: <g><path d="M10 1l8 10-8 8-8-8z" fill="#edf6ea" stroke="#899" /><path d="M10 18V4M10 17L5 8M10 17l5-9M10 18l-6-5M10 18l6-5" stroke="#3f9b3c" strokeWidth="1.500" /></g>,
  raster: <g><path d="M2 2h16v16H2z" fill="#b7c9e2" /><path d="M2 2h5v5H2zM13 2h5v5h-5zM7 7h6v6H7zM2 13h5v5H2z" fill="#23364f" /><path d="M13 7h5v6h-5z" fill="#4c6488" /></g>,
};

const Icon = ({ name }) => <svg width="28" height="28" viewBox="0 0 28 28">{ICONS[name]}</svg>;
const SmallIcon = ({ name }) => <svg width="20" height="20" viewBox="0 0 20 20" overflow="visible">{SMALL[name]}</svg>;

const SearchIcon = () => (
  <svg width="18" height="18" viewBox="0 0 18 18" fill="none" stroke="#808080" strokeWidth="1.5">
    <circle cx="7" cy="7" r="5.5" />
    <path d="M11 11l5 5" strokeWidth="2" />
  </svg>
);

/* ---------- data ---------- */

const MENUS = [
  ['工程', 'J'], ['编辑', 'E'], ['视图', 'V'], ['图层', 'L'], ['设置', 'S'], ['插件', 'P'], ['矢量', 'O'],
  ['栅格', 'R'], ['数据库', 'D'], ['Web', 'W'], ['网孔', 'M'], ['数据处理', 'C'], ['帮助', 'H'],
];

// "*" = disabled, "+" = has a drop-down arrow, "!" = pressed, "|" = separator
const TOP_TOOLS = [
  { width: 247, tools: ['fresh', 'open', 'save', 'layout', 'manager', 'style'] },
  { width: 659, tools: ['hand!', 'pan', 'zoomIn', 'zoomOut', 'zoomFull', 'zoomSelection', 'zoomLayer', 'zoomNative*', 'zoomLast', 'zoomNext*', 'newMap', 'map3d', 'newBookmark', 'bookmarks', 'clock', 'refresh'] },
  { width: 223, tools: ['select+', 'form+', 'deselect+', 'location+'] },
  { width: 374, tools: ['identify', 'abacus', 'gear!', 'sigma', 'table+', 'measure+', 'tip', 'run*+'] },
];

const EDIT_TOOLS = [
  { width: 288, tools: ['dataSource', 'geoPackage', 'newShape', 'feather', 'chip', 'mesh', 'virtual'] },
  { width: 564, tools: ['pencils*', 'pencil', 'saveEdits*', 'line*+', 'vertexNew*', 'vertexTool*+', 'modify*', 'trash*', 'cut*', 'copy*', 'paste*', 'undo*', 'redo*'] },
  { width: 390, tools: ['label', 'diagram', '|', 'labelPin', 'labelRed', '|', 'labelHold*', 'labelShow*', 'labelMove*', 'labelRotate*', 'labelEdit*'] },
  { width: 122, tools: ['globeAdd', 'globeFind', 'binoculars'] },
  { width: 40, tools: ['python'] },
  { width: 40, tools: ['help'] },
];

const BROWSER = [
  ['feather', 'SpatiaLite'], ['elephant', 'PostgreSQL'], ['hana', 'SAP HANA'], ['mssql', 'MS SQL Server'],
  ['oracle', 'Oracle'], ['world', 'WMS/WMTS'], ['cube', '场景'], ['vectorGrid', 'Vector Tiles'],
  ['xyz', 'XYZ Tiles', 'open'], ['xyz', 'Mapzen Global Terrain', 'child'], ['xyz', 'OpenStreetMap', 'child'],
  ['xyz', 'Tianditu', 'child'], ['wcs', 'WCS'], ['wfs', 'WFS / OGC API - Features'], ['arcgis', 'ArcGIS REST 服务器'],
];

const TOOLBOX = [
  '最近用过', '3D瓦片', '插值', '点云数据管理', '点云提取', '点云转换', '矢量创建', '矢量叠加分析', '矢量分析',
  '矢量几何图形', '矢量属性表', '矢量通用', '矢量瓦片', '矢量选择集', '图表', '图层工具', '网孔', '网络分析',
  '文件工具', '栅格创建', '栅格地形分析', '栅格分析', '栅格工具', '制图', 'Database', 'GPS', 'GDAL', 'GRASS',
];

const TOOLBOX_ICONS = { 最近用过: 'clock', GDAL: 'gdal', GRASS: 'grass' };

// Every sheet has its own origin, three units to a map pixel.
// shapes are closed outlines, lines are outlines that run on into the next sheet.
const SHEETS = [
  {
    x: 590, y: 260,
    roads: [
      '218,22 250,135 282,255 290,290 318,435 330,510 352,600 378,665 390,700 430,735 470,750 515,755 540,730 550,690 545,665 520,640 490,632 430,645 378,665',
      '412,22 445,150 495,265 545,365 558,400 555,450 595,510 680,580 720,665 725,750',
      '585,22 615,85 660,160 712,270 625,330 575,373', '712,270 760,255 815,225',
      '785,22 815,80 880,200 965,340 1010,420 1060,520 1100,595 1160,700 1215,810',
      '865,22 920,120 1000,265 1030,320 1055,380 1080,440', '815,75 880,45 915,22',
      '655,150 810,76', '668,170 820,90', '615,85 690,38', '515,72 580,40', '330,510 450,480 555,450',
      '460,485 485,632', '515,755 515,773 640,773 680,773 725,750 830,705 1035,622 1100,595 1190,555 1232,530',
      '965,338 1030,305 1190,232 1232,320', '1010,408 1055,392 1150,355 1232,310', '712,470 750,548 810,550 860,540 883,505',
      '680,580 750,548', '720,668 810,628', '785,645 825,705', '1035,622 1070,700 1130,812',
      '230,137 300,128', '275,278 320,273', '290,437 365,428', '590,270 625,330', '660,412 810,322',
      '385,745 430,738', '640,773 650,812', '672,773 682,812', '515,773 480,815', '400,812 515,775',
      '8,815 60,770 143,728', '8,180 20,190 35,240 45,310 50,400 60,480 75,545 80,580 60,620 8,622',
      '8,308 42,305', '8,380 48,378', '8,450 50,448', '8,478 58,475', '8,530 70,525', '8,570 75,548',
      '905,812 905,785 1065,705', '310,590 345,592',
    ],
    shapes: [
      '150,95 162,95 162,85 182,84 182,80 208,80 214,83 214,98 186,104 160,110 152,106', '182,84 186,104', '182,118 196,118 200,138 190,146 180,138', '172,155 215,147 230,152 228,165 176,175',
      '302,65 312,58 335,52 366,48 370,64 340,75 307,80', '312,58 315,78', '360,50 363,66', '334,82 345,80 350,100 340,112 329,100', '317,128 372,117 374,135 325,145 317,138',
      '168,238 190,225 220,220 247,216 250,238 200,248 170,250', '190,226 194,248', '226,248 240,246 243,272 232,278 222,268', '185,296 270,284 270,304 190,317',
      '316,205 400,184 410,190 410,205 325,220', '345,225 360,222 368,245 352,257 340,245', '330,268 415,250 418,270 345,287 330,280',
      '168,400 192,395 192,415 170,418', '192,390 215,388 217,410 195,414', '218,392 280,376 285,395 240,408 220,404', '260,408 272,408 280,432 266,440 256,428', '250,456 298,445 298,460 252,472',
      '352,360 415,346 418,362 360,376', '386,378 400,376 402,400 390,410 380,400', '368,428 425,414 432,428 380,444 370,440', '176,478 230,460 233,478 185,492',
      '463,435 520,415 526,442 472,462', '467,408 475,402 482,412 475,422 468,418', '513,417 519,444', '471,433 479,459',
      '195,560 250,545 254,562 205,575', '268,545 290,540 293,557 272,560', '292,538 318,530 327,548 295,556', '300,566 318,570 312,590 298,588', '220,632 262,618 278,622 262,640 225,650', '275,612 335,592 345,606 285,626',
      '238,712 290,700 296,716 248,732', '310,700 365,686 372,702 315,718', '340,722 355,724 352,748 338,740', '325,765 380,750 385,768 335,782', '258,788 312,768 325,780 285,804 260,800',
      '470,30 480,22 545,22 476,50', '505,92 585,48 597,66 517,112', '580,48 592,44 597,66 586,68', '512,90 524,108', '580,128 612,98 625,115 620,128 590,142', '652,70 728,30 737,50 662,95', '720,34 729,54', '659,66 669,90',
      '462,140 487,126 494,142 470,156', '498,208 540,187 546,208 510,224', '545,262 585,240 595,258 558,282', '645,258 690,235 696,255 660,276', '720,200 800,155 812,178 735,222', '792,160 803,182', '728,196 742,218',
      '703,312 780,270 792,292 716,336', '772,275 783,297', '711,308 723,332', '640,372 675,350 687,372 652,394', '655,405 805,316 812,328 662,418', '856,238 868,232 887,262 874,270',
      '812,395 825,372 845,360 868,372 875,392 862,412 840,418 820,410', '783,420 820,418 842,418 855,440 848,456 820,464 805,454 804,445 784,440', '785,478 800,462 830,462 847,480 842,508 815,522 790,508',
      '645,495 655,475 675,466 695,475 710,475 722,500 720,530 690,540 670,530 660,510', '890,380 958,390 965,430 982,440 978,450 950,444 922,440 886,430', '920,402 950,407 948,422 918,418', '915,382 908,412',
      '1135,160 1172,142 1200,195 1168,215', '708,612 735,600 752,640 720,652', '738,605 780,575 798,585 802,610 755,638', '490,545 555,522 588,615 590,633 540,640 520,632 490,575', '405,595 427,590 430,612 412,617', '497,580 512,578 513,596 499,598', '572,618 590,616 592,634 575,635',
      '1040,315 1180,245 1192,270 1170,280 1172,292 1062,340', '1085,400 1220,345 1232,370 1110,448', '1040,315 1058,308 1125,440 1108,446', '1060,355 1078,348 1085,365 1067,372', '1160,250 1180,243 1192,265 1172,276',
      '865,735 1000,662 1028,700 885,780', '1192,500 1202,498 1204,510 1194,512',
      '8,228 22,228 35,298 8,300', '8,316 42,312 45,375 8,378 8,345 25,345 22,320', '8,388 42,385 46,440 22,446 8,430', '8,485 50,482 58,520 8,522', '8,570 55,568 58,595 20,610 8,605', '8,628 65,628 65,676 8,676', '8,740 50,710 60,725 8,762', '445,105 455,108 460,130 448,128', '8,640 60,640 60,645 8,645',
    ],
    lines: [
      '766,498 760,488 752,490 725,435 750,422 754,408 738,384 795,358 800,364 820,350 848,342 850,358 830,364 808,375 812,400', '786,488 775,500 762,495',
      '1232,560 1145,605 1160,645 1200,635 1232,700', '1232,415 1195,430 1212,440 1205,455 1232,490', '798,358 815,372 810,395 825,415', '800,460 782,475 790,505',
    ],
    circles: ['845,388,29', '828,440,26', '817,492,30', '1010,677,16', '1067,782,15', '1214,255,10'],
  },
  {
    x: 1000, y: 260,
    roads: [
      '385,22 387,80 380,120 290,260 190,360 140,430 110,462 72,475 -2,515', '387,98 480,97 500,104 550,95',
      '525,22 548,90 578,150 615,205 685,270 750,315 825,390 860,455 900,505 935,570 938,595 830,812',
      '578,130 720,22', '685,270 785,198 870,140 1025,22', '785,200 930,390', '860,450 930,395 1125,260 1215,190',
      '860,455 830,470 800,540 745,690 680,812', '938,595 1010,540 1215,320', '-2,300 120,222 235,155 250,115 253,75',
      '110,205 145,300 190,355', '145,300 75,340 40,385', '75,345 110,415', '-2,300 40,385 72,475 95,515 170,700 218,812',
      '140,430 170,465 210,465 270,435 312,408', '95,510 155,488 178,515', '-2,800 170,710', '340,812 395,785', '1172,22 1215,90',
    ],
    shapes: [
      '245,22 275,22 285,60 258,68', '98,155 197,100 220,140 120,195', '62,162 90,150 105,185 82,198', '6,312 108,255 132,292 30,345', '30,350 45,345 50,358 38,364', '62,265 75,260 78,270 66,274', '95,245 105,242 108,252 98,256',
      '740,70 800,28 845,88 805,125 785,128 762,100', '762,100 825,55 848,85 785,125', '780,95 790,112', '820,35 832,25 876,82 862,92', '785,128 845,78 870,108 808,160', '918,45 945,22 962,48 935,70',
      '845,208 1010,85 1125,243 960,368', '1013,85 1055,45 1170,28 1215,92 1215,175 1128,243', '318,420 422,365 444,405 342,460', '238,472 302,438 312,455 330,448 342,468 265,512', '137,550 245,492 266,535 182,578 212,640 196,648 152,575', '198,650 298,597 320,635 222,690',
      '292,572 370,515 397,568 315,614', '375,515 435,485 438,470 458,462 478,465 498,503 398,560', '338,540 345,525 368,512 372,522', '505,570 572,545 574,560 510,583', '540,557 543,572', '465,615 500,600 502,612 470,628', '485,622 494,620 500,640 494,646',
      '665,620 680,615 688,606 710,628 690,690 680,700 655,685',
      '1105,540 1175,445 1213,475 1213,520 1172,580', '1030,712 1072,604 1142,638 1102,738', '1088,390 1118,368 1124,376 1095,398', '1118,365 1165,332 1170,340 1125,372', '8,710 82,670 105,708 22,752',
    ],
    lines: [
      '-4,190 60,160 80,205 -4,250', '430,780 410,765 408,752 420,748 415,730 508,683 500,668 570,630 590,650 592,688 530,718 520,715 515,735 455,765 458,790',
      '565,812 628,705 635,702 674,722 625,812', '440,805 525,760 528,775 520,805', '862,812 915,735 970,780 970,795', '-4,612 40,590 50,625 68,640 82,670 8,708 -4,680',
      '-4,555 20,548 30,565 55,560 112,675 98,685 82,668', '-4,402 22,402 45,478 25,485 -4,430', '908,22 922,45 920,60', '1182,22 1215,72',
    ],
    circles: ['524,760,6', '1167,393,3'],
  },
  {
    x: 590, y: 520,
    roads: [
      '640,-4 665,170 720,400 745,440 820,485', '675,-4 760,335 825,490 870,545 905,562 950,560 1100,440 1160,425 1200,440 1232,465',
      '725,525 770,505 825,495', '720,400 718,640 700,660 665,675 660,730 670,762 690,768', '515,-6 480,40 510,200 545,265 590,370 605,400 720,402',
      '400,30 480,10', '480,38 470,8', '440,52 550,32', '422,172 598,147', '425,290 545,265 650,242', '452,377 578,350',
      '8,100 20,65 60,58 130,58 155,80 160,135 210,270 270,435 320,550 340,630 240,775', '8,100 40,130 60,160 165,138', '65,175 170,170', '60,160 50,205 45,248',
      '45,248 20,262 14,295 22,335 50,355 90,325 97,285 75,255 45,248', '95,278 208,272', '8,340 22,350 50,355 75,385 70,430 45,475 8,488', '85,335 105,390 110,500 135,545 140,600 130,650 150,710 150,735 120,742 80,735 50,670 50,580 90,560 115,515', '45,475 55,520 50,580',
      '110,438 270,436', '145,568 320,548 340,538', '150,715 280,715', '80,735 20,775', '120,742 118,775', '8,648 45,648', '905,-4 910,60 940,150 1028,292',
      '1105,-4 1140,60 1170,45 1215,160 1215,250 1232,270', '1150,60 1200,190', '1090,315 1160,420', '1105,325 1160,295', '950,560 980,610 1010,635 1105,762 1232,680', '1010,635 1232,490', '300,775 350,740 345,718 330,715 320,735', '350,730 380,775', '1232,400 1212,405 1212,425 1232,440', '8,42 40,10',
    ],
    shapes: [
      '22,90 38,88 38,78 46,78 46,88 70,90 70,78 80,78 80,88 105,90 105,78 114,78 116,90 128,92 125,112 110,118 50,115 24,112', '60,215 75,212 78,200 85,212 100,218 98,238 55,240', '103,205 115,203 115,192 122,203 148,205 150,193 157,205 170,210 168,228 105,225',
      '107,328 122,326 125,316 132,328 158,330 162,317 168,328 190,328 193,316 200,328 212,332 208,352 110,350', '119,470 140,468 145,460 150,470 190,472 195,460 200,470 218,475 240,475 243,467 266,475 268,500 220,502 180,493 122,498', '142,603 165,602 165,592 172,604 210,606 213,596 220,606 240,606 245,596 252,608 285,606 290,596 298,608 306,612 305,630 145,632',
      '320,38 372,20 378,38 330,55', '338,78 395,68 400,90 342,98', '400,68 465,55 472,74 402,90', '490,50 612,30 620,50 498,78', '372,215 400,212 402,205 435,202 438,228 375,237', '440,200 498,192 502,215 443,224', '523,190 555,180 648,165 652,188 528,212', '410,303 430,300 434,325 412,328', '432,300 460,295 538,280 542,303 435,320', '437,396 460,394 463,418 440,421', '463,395 568,374 572,395 466,416',
      '575,270 662,252 676,344 602,358 598,335 588,330', '662,320 670,316 676,344 664,346', '184,424 190,410 196,424', '197,554 201,540 206,554', '710,85 748,62 770,98 735,118', '758,65 785,43 806,72 778,92', '735,118 755,112 768,130 745,150', '760,145 815,118 832,152 785,190', '815,108 845,94 862,125 840,143 820,130',
      '778,340 818,322 832,345 800,368', '817,395 850,374 872,395 835,417', '935,440 945,422 965,418 980,440 960,462 940,458', '967,368 1012,338 1052,395 1040,410 1010,432', '1003,342 1040,408', '463,575 477,572 506,635 495,640', '622,655 670,608 678,615 628,660', '518,678 528,688 560,695 590,688 594,698 565,708 530,698 518,688',
      '728,535 772,533 776,556 730,558', '748,560 765,560 768,580 758,600 746,582', '730,608 780,604 780,630 735,632', '670,700 735,688 780,682 802,685 800,698 740,708 700,718 672,715', '697,730 706,716 706,764 696,756', '742,770 750,760 805,762 805,775', '595,760 645,748 646,760 600,768', '725,655 730,646 734,656', '130,775 134,755 152,738 170,752 190,745 205,732 225,745 232,768 220,775',
      '915,50 1050,-10 1062,10 935,90', '992,70 1065,40 1086,95 1020,128', '975,170 1120,100 1148,130 1000,210', '1140,140 1150,136 1170,180 1158,184', '1025,260 1170,182 1188,222 1048,300', '990,575 1008,565 1028,595 1010,605', '1002,550 1120,475 1138,500 1018,590', '1130,480 1150,468 1166,490 1148,510', '1060,660 1155,594 1210,665 1115,740', '1060,672 1110,732 1092,732 1062,690', '960,722 980,712 990,735 970,742', '885,770 895,750 915,742 920,762 900,775',
      '1200,700 1215,720 1205,728 1196,712', '8,185 50,168 58,180 48,240 8,262', '8,398 25,398 25,420 8,420', '8,530 22,526 28,545 8,552', '8,685 20,676 40,690 36,712 8,712', '25,775 30,766 42,768 40,775',
    ],
    lines: ['1232,335 1185,355 1188,368 1200,380 1232,370', '878,772 905,740 982,690 1026,750 990,770', '990,735 925,775'],
    circles: ['1122,108,16', '1177,213,16', '1076,540,13', '841,444,4', '619,664,4', '1028,48,7', '752,132,12'],
  },
  {
    x: 1000, y: 520,
    roads: [
      '-2,40 60,150 120,270 190,380 225,460 310,590 345,680 380,775', '205,-4 240,80 300,100 350,140 420,245', '250,82 400,0',
      '690,-4 640,90 590,160 510,185 420,245 240,330 195,370 190,385 120,400 20,440 -2,455', '835,-4 775,115 720,250 600,500 550,620 485,715 440,775',
      '665,50 775,112', '45,305 120,275', '-2,270 45,305 120,400', '498,200 495,250 485,290 500,360', '-2,450 65,560 120,630 220,775',
      '65,555 225,462', '65,560 20,600 40,655 100,740 135,775', '-2,675 40,655', '20,775 100,740', '345,680 430,710 485,715',
      '850,300 780,250 740,320 630,520 628,548 700,578 850,300', '850,300 930,335 1000,375 1028,408', '985,378 760,592', '718,560 760,592 802,637',
      '905,688 955,665 1050,580 1055,552', '1145,472 1215,520', '1100,518 1210,585', '1065,738 1140,775', '1085,775 1095,750', '70,520 103,492', '548,760 562,775',
    ],
    shapes: [
      '140,-22 32,40 38,58 50,60 60,74 155,24 162,18', '90,120 180,70 200,102 218,108 245,158 268,215 252,225 240,195 228,182 215,150 192,115 160,130 145,130 138,148 98,166', '155,25 180,70', '168,280 308,202 330,240 190,318', '204,262 235,250 238,262 210,276',
      '244,362 272,345 280,352 435,262 445,280 262,390', '262,390 295,372 302,395 270,412', '300,470 436,388 447,408 352,465 350,480 325,497', '370,350 385,338 398,335 400,325 418,315 428,335 415,340 418,350 436,342 446,368 402,390 385,375 385,360', '290,440 318,430 328,452 300,470', '262,400 300,462 288,462 270,430',
      '727,400 780,280 822,300 768,415', '645,555 700,438 745,455 690,572', '735,440 748,413 764,425 755,450', '752,450 828,305', '766,482 845,315 955,368 785,525', '690,572 830,300',
      '535,660 558,612 580,620 560,672', '568,612 582,584 637,612 605,640', '560,650 622,625 640,645 590,700 560,685', '550,700 562,690 580,700 570,712', '990,148 1030,52 1104,76 1085,140 1060,185', '912,268 975,182 1040,222 972,318',
      '987,650 1045,597 1080,632 1065,655 1072,665 1020,686', '1042,680 1078,662 1085,675 1050,704', '1078,728 1105,700 1150,712 1165,702 1185,715 1160,762 1115,742 1095,742', '1095,628 1110,614 1138,640 1128,645 1115,635 1108,642', '1120,575 1135,552 1152,565 1138,584', '1148,625 1175,585 1198,600 1180,640', '1140,655 1160,640 1195,675 1190,690', '1130,530 1150,498 1165,510 1158,525 1175,545 1165,552', '1200,545 1214,520 1214,568', '1068,575 1075,570 1090,590 1078,595', '1188,775 1195,755 1214,765 1214,775',
      '0,395 40,380 58,390 56,412 14,435 5,430', '33,462 60,440 90,436 97,458 50,488', '40,760 75,740 85,760 60,775', '2,345 10,355 2,362',
    ],
    lines: [
      '400,0 378,30 370,45 352,48 412,168 438,155 456,165 545,115 555,118 570,92 598,75 605,75 645,-4', '456,165 392,48 440,22 460,55 500,42 520,25 526,-10', '445,132 480,110 480,95 494,95 498,105 548,75 585,-8',
      '970,10 930,70 892,130 828,95 835,80 885,-4', '298,375 336,445', '2,705 40,685 60,735', '500,775 518,757 535,775', '1160,682 1190,690 1214,650', '1180,640 1214,590',
    ],
    circles: ['262,150,7', '478,370,5', '487,386,5', '240,386,4', '303,487,4', '1124,670,3', '1126,707,5', '75,518,3', '1200,706,4', '1200,720,4'],
  },
];

/* ---------- map ---------- */

const LINE = '#78b265';

const MapLayer = ({ kind }) => SHEETS.map(sheet => (
  <g key={`${sheet.x}-${sheet.y}`} transform={`translate(${sheet.x} ${sheet.y}) scale(${1 / 3})`} fill="none" stroke={LINE} strokeWidth="3.3">
    {kind === 'shapes'
      ? <>
        {sheet.shapes.map(points => <polygon key={points} points={points} />)}
        {sheet.lines.map(points => <polyline key={points} points={points} />)}
        {sheet.circles.map(circle => {
          const [cx, cy, r] = circle.split(',');
          return <circle key={circle} cx={cx} cy={cy} r={r} fill="#fff" />;
        })}
      </>
      : sheet.roads.map(points => (
        <polyline
          key={points}
          points={points}
          strokeLinejoin="round"
          stroke={kind === 'casing' ? LINE : '#fff'}
          strokeWidth={kind === 'casing' ? 13 : 6.5}
          strokeLinecap={kind === 'casing' ? 'square' : 'butt'}
        />
      ))}
  </g>
));

const MapView = () => (
  <svg viewBox="376 123 1164 841" role="img" aria-label="njtech_building">
    <clipPath id="extent"><path d="M591 266h815v513H591z" /></clipPath>
    <g clipPath="url(#extent)">
      <MapLayer kind="shapes" />
      <MapLayer kind="casing" />
      <MapLayer kind="fill" />
    </g>
    <path d="M592.5 267.5h812v511h-812z" fill="none" stroke={LINE} strokeWidth="1.2" />
  </svg>
);

/* ---------- components ---------- */

const ToolItem = ({ code }) => {
  if (code === '|') {
    return <Separator />;
  }
  const name = code.replace(/[*+!]/g, '');
  const disabled = code.includes('*');
  const tool = (
    <Tool aria-label={name} disabled={disabled} $active={code.includes('!')}>
      <Icon name={name} />
    </Tool>
  );
  if (!code.includes('+')) {
    return tool;
  }
  return (
    <Split>
      {tool}
      <Arrow aria-label={`${name} menu`} disabled={disabled} />
    </Split>
  );
};

const Tools = ({ groups, children }) => (
  <ToolBar role="toolbar">
    {groups.map(group => (
      <React.Fragment key={group.tools[0]}>
        <Handle />
        <ToolGroup $width={group.width}>
          {group.tools.map((code, i) => <ToolItem key={i} code={code} />)}
        </ToolGroup>
      </React.Fragment>
    ))}
    {children}
  </ToolBar>
);

const DockHeader = ({ title }) => (
  <DockTitle>
    <h2>{title}</h2>
    <DockButton aria-label="float">
      <svg width="14" height="14" viewBox="0 0 14 14" fill="none" stroke="#666">
        <rect x=".5" y=".5" width="13" height="13" rx="2" />
        <path d="M5.5 3.5h5v5h-5zM5 5.5H3.5v5h5V9" strokeWidth="1.3" />
      </svg>
    </DockButton>
    <DockButton aria-label="close">
      <svg width="14" height="14" viewBox="0 0 14 14" fill="none" stroke="#666">
        <rect x=".5" y=".5" width="13" height="13" rx="2" />
        <path d="M3.5 3.5l7 7M10.5 3.5l-7 7" strokeWidth="2.2" />
      </svg>
    </DockButton>
  </DockTitle>
);

const SmallTools = ({ names }) => (
  <DockTools>
    {names.map((name, i) => {
      if (name === '|') return <Separator key={i} $small />;
      if (name === '+') return <SmallArrow key={i} aria-label="menu" />;
      return <SmallTool key={i} aria-label={name}><SmallIcon name={name} /></SmallTool>;
    })}
  </DockTools>
);

const Check = ({ label, id, initial }) => {
  const [on, setOn] = useState(initial);
  return (
    <CheckWrap>
      <input id={id} type="checkbox" aria-label={label} checked={on} onChange={() => setOn(!on)} />
      {on && (
        <svg width="13" height="13" viewBox="0 0 13 13" fill="none" stroke="#000" strokeWidth="2.5">
          <path d="M2 6l3 5 6-10" />
        </svg>
      )}
    </CheckWrap>
  );
};

const Spin = ({ id, value }) => (
  <Stepper>
    <input id={id} defaultValue={value} />
    <StepButtons>
      <button aria-label="up"><svg width="10" height="6"><path d="M0 6l5-6 5 6z" fill="#555" /></svg></button>
      <button aria-label="down"><svg width="10" height="6"><path d="M0 0l5 6 5-6z" fill="#555" /></svg></button>
    </StepButtons>
  </Stepper>
);

const Browser = () => (
  <Dock>
    <DockHeader title="浏览器" />
    <SmallTools names={['addLayer', 'refresh', 'filter', 'collapse', 'info']} />
    <TreeFrame>
      <BrowserTree>
        {BROWSER.map(([icon, name, kind], i) => (
          <TreeRow key={name} $open={kind === 'open'} $child={kind === 'child'} $hover={i === 11}>
            {kind === 'open' && <Expander aria-label="collapse" />}
            <SmallIcon name={icon} />
            {name}
          </TreeRow>
        ))}
      </BrowserTree>
      <ScrollBar>
        <ScrollButton $up aria-label="scroll up" />
        <ScrollTrack><ScrollThumb /></ScrollTrack>
        <ScrollButton aria-label="scroll down" />
      </ScrollBar>
    </TreeFrame>
  </Dock>
);

const Layers = () => (
  <Dock $fill>
    <DockHeader title="图层" />
    <SmallTools names={['brush', 'group', 'eye', 'filterMenu', 'epsilon', '+', 'expand', 'collapse', 'removeLayer']} />
    <TreeFrame $fill>
      <Tree>
        <LayerRow $selected>
          <ExpanderSpace />
          <Check label="njtech_building" initial />
          <LayerSwatch><svg width="20" height="2"><path d="M0 1h20" stroke="#3ca59d" strokeWidth="1.5" /></svg></LayerSwatch>
          <LayerName>njtech_building</LayerName>
          <Indicator aria-label="unknown projection">
            <svg width="14" height="14" viewBox="0 0 14 14" fill="none" stroke="#999">
              <circle cx="7" cy="7" r="6" />
              <path d="M4 5c0-4 6-4 6 0 0 2-3 2-3 4M7 10.5v2" stroke="#444" strokeWidth="2" />
            </svg>
          </Indicator>
        </LayerRow>
        <LayerRow>
          <Expander aria-label="expand" $width={22} />
          <Check label="Tianditu" initial={false} />
          <LayerSwatch><SmallIcon name="raster" /></LayerSwatch>
          <LayerName>Tianditu</LayerName>
          <Indicator aria-label="warning">
            <svg width="14" height="14" viewBox="0 0 14 14" fill="none" stroke="#555" strokeWidth="1.2">
              <path d="M7 1l6 12H1zM7 5v4M7 10v1.5" />
            </svg>
          </Indicator>
        </LayerRow>
      </Tree>
    </TreeFrame>
  </Dock>
);

const Toolbox = () => (
  <Dock $fill>
    <DockHeader title="工具箱" />
    <SmallTools names={['models', 'python', 'clock', 'log', '|', 'inPlace', '|', 'wrench']} />
    <ToolboxSearch>
      <SearchIcon />
      <input aria-label="搜索" placeholder="搜索..." />
    </ToolboxSearch>
    <ToolboxTree>
      {TOOLBOX.map(name => (
        <ToolboxRow key={name}>
          <Expander $closed aria-label="expand" $width={18} />
          <SmallIcon name={TOOLBOX_ICONS[name] || 'qgis'} />
          {name}
        </ToolboxRow>
      ))}
    </ToolboxTree>
  </Dock>
);

const Status = () => (
  <StatusBar>
    <Locator>
      <SearchIcon />
      <input aria-label="搜索" placeholder="搜索 (Ctrl+K)" />
    </Locator>
    <Field>
      <label htmlFor="coords">坐标</label>
      <TextBox id="coords" defaultValue="13206841, 3773310" />
    </Field>
    <StatusButton $space={6} aria-label="extents">
      <svg width="20" height="20" viewBox="0 0 20 20" fill="none" stroke="#111" strokeWidth="1.5">
        <path d="M2 8c0-6 4-8 6-6l6 11c2 4-3 7-5 4L3 10M5 3l6 12M10 3l-7 9M14 4l3-3M15 8h3" />
        <circle cx="12" cy="14" r="4" />
      </svg>
    </StatusButton>
    <Field $space={16}>
      <label htmlFor="scale">比例</label>
      <ScaleBox>
        <select id="scale" defaultValue="1:7222"><option>1:7222</option></select>
      </ScaleBox>
    </Field>
    <StatusButton $space={13} aria-label="lock scale">
      <svg width="20" height="20" viewBox="0 0 20 20">
        <path d="M5 9V6c0-6 10-6 10 0v3" fill="none" stroke="#888" strokeWidth="2" />
        <rect x="3" y="9" width="14" height="10" rx="1" fill="#5e5e5e" />
      </svg>
    </StatusButton>
    <Field $space={8}>
      <label htmlFor="magnifier">放大镜</label>
      <Spin id="magnifier" value="100%" />
    </Field>
    <Field $gap={11}>
      <label htmlFor="rotation">旋转角度</label>
      <Spin id="rotation" value="0.0°" />
    </Field>
    <Field>
      <Check id="render" label="渲染" initial />
      <label htmlFor="render">渲染</label>
    </Field>
    <StatusButton $space={19}>
      <svg width="20" height="20" viewBox="0 0 20 20" fill="none">
        <path d="M1 9l3-6h12l3 6-3 4-6 6-6-6z" fill="#8a8a8a" />
        <path d="M1 8h18M3 12h14M10 2v17M6 3c-2 4-1 10 4 16M14 3c2 4 1 10-4 16M4 5h12" stroke="#eee" />
      </svg>
      EPSG:3857
    </StatusButton>
    <StatusButton $space={34} aria-label="messages">
      <svg width="20" height="20" viewBox="0 0 20 20">
        <path d="M10 1c12 0 12 13 6 14l2 4-6-3C-3 17-3 1 10 1z" fill="#5a5a5a" />
        <path d="M5 8.500h2M9 8.500h2M13 8.500h2" stroke="#fff" strokeWidth="2" />
      </svg>
    </StatusButton>
  </StatusBar>
);

const App = () => (
  <>
    <GlobalStyle />
    <Window>
      <MenuBar>
        {MENUS.map(([name, key]) => <MenuItem key={name}>{name}(<u>{key}</u>)</MenuItem>)}
      </MenuBar>
      <Tools groups={TOP_TOOLS} />
      <Tools groups={EDIT_TOOLS}><Handle /></Tools>
      <Main>
        <LeftDock>
          <Browser />
          <Splitter />
          <Layers />
        </LeftDock>
        <Canvas><MapView /></Canvas>
        <Toolbox />
      </Main>
      <Status />
      <Watermark>掘金技术社区 @ 松果猿</Watermark>
    </Window>
  </>
);

export default App;
